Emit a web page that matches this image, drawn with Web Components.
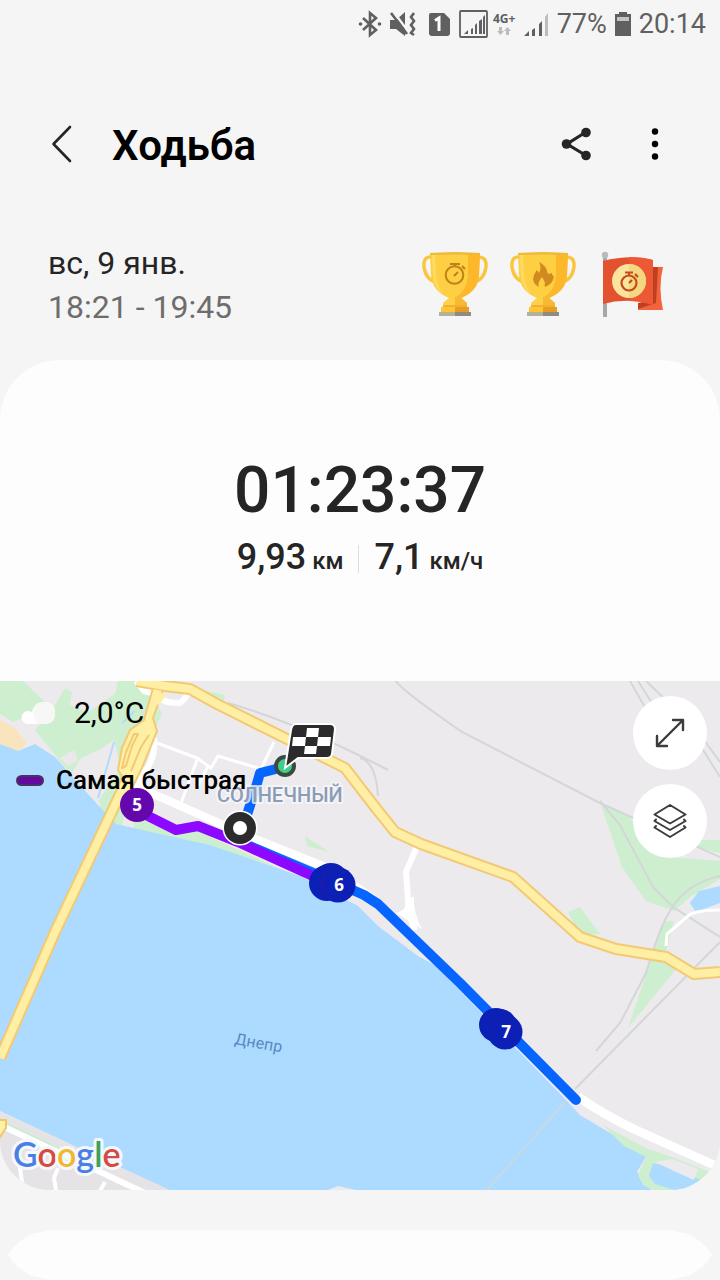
<!DOCTYPE html>
<html lang="ru">
<head>
<meta charset="utf-8">
<meta name="viewport" content="width=device-width, initial-scale=1">
<title>Ходьба</title>
<style>
  html { background: #f5f5f5; }
  body { margin: 0; font-family: Roboto, "Noto Sans", sans-serif; color: #252525; overflow-x: hidden; }
</style>
</head>
<body>
<workout-page></workout-page>

<script>
const define = (name, html) => {
  const template = document.createElement('template');
  template.innerHTML = html;
  customElements.define(name, class extends HTMLElement {
    constructor() {
      super();
      this.attachShadow({ mode: 'open' }).append(template.content.cloneNode(true));
    }
  });
};

define('status-bar', `
<style>
  :host { display: flex; justify-content: flex-end; align-items: center; gap: 4px; height: 48px; padding-right: 14px; color: #606060; font-size: 27px; line-height: 32px; }
  svg { display: block; fill: currentColor; }
  .net { display: flex; flex-direction: column; align-items: center; width: 25px; font: 700 12px/14px "Open Sans", "Noto Sans", sans-serif; }
</style>
<svg width="28" height="28" viewBox="356 9 28 28" role="img" aria-label="Bluetooth"><path d="M363 17l13 12-6 5V12l6 5-13 12" fill="none" stroke="currentColor" stroke-width="2.6"/><circle cx="360.500" cy="23" r="1.800"/><circle cx="379.500" cy="23" r="1.800"/></svg>
<svg width="31" height="28" viewBox="388 9 31 28" role="img" aria-label="Вибрация"><path d="M390 19h6l9-8v24l-9-7h-6z"/><path d="M393 10l17 23" stroke="#f5f5f5" stroke-width="2.400"/><path d="M391 12l16 21" stroke="currentColor" stroke-width="2.600"/><path d="M414 12l-3 4 3 4-3 4 3 4-3 4 3 2" fill="none" stroke="currentColor" stroke-width="2.600"/></svg>
<svg width="32" height="28" viewBox="423 9 32 28" role="img" aria-label="SIM 1"><path d="M431 12h13l6 6v14q0 3-3 3h-15q-3 0-3-3V14q0-2 2-2z"/><path d="M435 19.500l4-2.500v13" fill="none" stroke="#fff" stroke-width="3"/></svg>
<svg width="29" height="28" viewBox="460 9 29 28" role="img" aria-label="Сигнал"><rect x="461" y="10" width="27" height="26" rx="1" fill="none" stroke="currentColor" stroke-width="1.800"/><path d="M465 33l4-4v4zM472 28l2-1v6h-2zM476 24l2-2v11h-2zM480 20l3-2v15h-3zM484 16l2-2v19h-2z"/></svg>
<span class="net">4G+<svg width="16" height="10" viewBox="0 0 16 10"><path d="M3 1h3v4h2l-3.500 4L1 5h2zM10 9h3V5h2l-3.500-4L8 5h2z" fill="#bdbdbd"/></svg></span>
<svg width="32" height="28" viewBox="522 9 32 28" role="img" aria-label="Сигнал"><path d="M525 35l5-5v5zM533 29l3-2v8h-3zM540 23l3-3v15h-3z"/><path d="M546 16l3-4v23h-3z" fill="#bcbcbc"/></svg>
<span>77%</span>
<svg width="24" height="28" viewBox="611 9 24 28" role="img" aria-label="Батарея"><path d="M619 11h8v2h4v22h-16V13h4z"/><path d="M617 16h12v4h-12z" fill="#c4c4c4"/></svg>
<time>20:14</time>
`);

define('icon-button', `
<style>
  :host { display: block; flex: none; --size: 48px; --surface: transparent; }
  button { display: grid; place-items: center; width: var(--size); height: var(--size); padding: 0; border: 0; border-radius: 50%; background: var(--surface); cursor: pointer; }
</style>
<button type="button"><slot></slot></button>
`);

define('app-header', `
<style>
  :host { display: flex; align-items: center; gap: 26px; padding: 0 40px 0 38px; height: 72px; margin-top: 60px; color: #000; }
  h1 { flex: 1; margin: 0; padding-top: 4px; font-size: 42px; line-height: 52px; font-weight: 600; }
  nav { display: flex; gap: 32px; }
  svg { display: block; }
</style>
<icon-button><svg width="48" height="48" viewBox="38 120 48 48" role="img" aria-label="Назад"><path d="M70 127L53.500 144 70 161" fill="none" stroke="#252525" stroke-width="2.600" stroke-linecap="round" stroke-linejoin="round"/></svg></icon-button>
<h1>Ходьба</h1>
<nav>
  <icon-button><svg width="48" height="48" viewBox="552 120 48 48" role="img" aria-label="Поделиться"><path d="M586 132l-19 12 19 11.500" fill="none" stroke="#252525" stroke-width="3.200"/><g fill="#252525"><circle cx="586" cy="132.500" r="4.800"/><circle cx="566.500" cy="144" r="4.800"/><circle cx="586" cy="155.500" r="4.800"/></g></svg></icon-button>
  <icon-button><svg width="48" height="48" viewBox="632 120 48 48" role="img" aria-label="Ещё"><circle cx="655" cy="131.500" r="3.200"/><circle cx="655" cy="144" r="3.200"/><circle cx="655" cy="156.500" r="3.200"/></svg></icon-button>
</nav>
`);

define('trophy-cup', `
<style>
  :host { display: block; }
  svg { display: block; }
</style>
<svg width="72" height="72" viewBox="419 248 72 72">
  <path d="M432 257q-9-1-8 10 2 13 12 15M477 257q10-1 9 10-2 13-12 15" fill="none" stroke="#fbc43c" stroke-width="3.400"/>
  <path d="M430 253l25-.5 25 .5-1 22q-1 16-18 23h-12q-17-7-18-23z" fill="#fece43"/>
  <path d="M468 253l12 .3-1 22q-1 16-18 22.700h-6q12-7 13-22z" fill="#fcb72b"/>
  <path d="M432 255l1 20q2 15 10 19-6-8-7-18l-1-21z" fill="#ffdb62"/>
  <path d="M430 253l25-1 25 1-.5 2-24.500-.5-24.500.5z" fill="#edb93a"/>
  <path d="M443 303l7-6h10l7 6v4h-24z" fill="#ffd04a"/>
  <path d="M455 297h5l7 6v4h-12z" fill="#f8b932"/>
  <path d="M443 305h24v3h-24z" fill="#f0b235"/>
  <path d="M441 307h28v5h-28z" fill="#ffc535"/><path d="M455 307h14v5h-14z" fill="#e89c21"/>
  <path d="M439 312h32v4h-32z" fill="#b4b19a"/><path d="M455 312h16v4h-16z" fill="#8e8c80"/>
</svg>
`);

define('award-list', `
<style>
  :host { display: block; }
  ul { display: flex; gap: 16px; margin: 0; padding: 0; list-style: none; }
  li { display: grid; }
  li > * { grid-area: 1 / 1; }
  svg { display: block; }
</style>
<ul>
  <li aria-label="Рекорд времени"><trophy-cup></trophy-cup>
    <svg width="72" height="72" viewBox="419 248 72 72" fill="none" stroke="#c08117" stroke-width="2"><circle cx="454.500" cy="275" r="8.800"/><path d="M450 264h10M455 264v3M462 266l3 3M454 276l4-4"/></svg></li>
  <li aria-label="Рекорд калорий"><trophy-cup></trophy-cup>
    <svg width="72" height="72" viewBox="507 248 72 72"><path d="M539 287q-8-4-5-12 2-4 3-5l2 3q3-5 0-11 7 3 9 12l4-1q0 3 2 3-1 8-9 11-1-2 0-4-1-3-3-6-5 6-3 10z" fill="#d08a20"/></svg></li>
  <li aria-label="Новое достижение">
    <svg width="72" height="72" viewBox="595 248 72 72"><path d="M603 255h4v62h-4z" fill="#a5a8a9"/><circle cx="605" cy="255" r="3.200" fill="#b9bcbd"/><path d="M650 267h13q-5 20 0 43h-25v-6l12-4z" fill="#f1643e"/><path d="M653 267h5l-2 36-18 6v-6l14-3z" fill="#bf3f20"/><path d="M603 261q27-7 50-1v45q-25-8-50-1z" fill="#e3512e"/><path d="M629 257q15 0 24 3v45q-12-4-24-4z" fill="#ec5934"/><circle cx="629" cy="281" r="17" fill="#fbe49c"/><path d="M629 264a17 17 0 010 34z" fill="#f4d781"/><g fill="none" stroke="#c54a1c" stroke-width="2.200"><circle cx="629" cy="283" r="7.500"/><path d="M625 272.500h8M629 273v3M635 274l3 3M629 283l3-3"/></g></svg></li>
</ul>
`);

define('session-info', `
<style>
  :host { display: flex; justify-content: space-between; align-items: center; margin-top: 60px; padding: 0 53px 32px 48px; font-size: 32px; line-height: 44px; }
  p { margin: 0; }
  div { padding-top: 1px; height: 87px; }
  .hours { color: #6d6d6d; }
</style>
<div><p>вс, 9 янв.</p><p class="hours">18:21 - 19:45</p></div>
<award-list></award-list>
`);

define('workout-summary', `
<style>
  :host { display: flex; flex-direction: column; align-items: center; padding: 91px 24px 94px; background: #fdfdfd; border-radius: 60px 60px 0 0; font-weight: 500; }
  .duration { font-size: 64px; line-height: 80px; }
  .stats { display: flex; align-items: center; gap: 15px; margin: 0; font-size: 36px; line-height: 52px; }
  .stats span { display: flex; align-items: baseline; gap: 6px; white-space: nowrap; }
  .stats small { font-size: 24px; }
  i { width: 1px; height: 28px; background: #dedede; }
</style>
<time class="duration">01:23:37</time>
<p class="stats"><span>9,93 <small>км</small></span><i></i><span>7,1 <small>км/ч</small></span></p>
`);

define('route-map', `
<style>
  :host { display: grid; overflow: hidden; border-radius: 0 0 50px 50px; background: #eceaed; color: #000; }
  .canvas, .over { grid-area: 1 / 1; }
  .canvas { display: block; width: 100%; height: auto; }
  .over { display: flex; justify-content: space-between; align-items: flex-start; padding: 15px 13px 0 16px; z-index: 1; }
  .row { display: flex; align-items: center; }
  .weather { height: 34px; gap: 12px; font-size: 30px; line-height: 34px; }
  .legend { height: 34px; gap: 12px; margin-top: 33px; font-size: 26px; font-weight: 500; line-height: 34px; }
  .swatch { width: 24px; height: 7px; border: 2px solid #493262; border-radius: 6px; background: #65089f; }
  .tools { display: grid; gap: 14px; }
  .tools icon-button { --size: 74px; --surface: #fff; }
  svg { display: block; }
</style>
<svg class="canvas" viewBox="0 681 720 509" role="img" aria-label="Карта маршрута">
  <rect y="681" width="720" height="509" fill="#eceaed"/>
  <g fill="#cdefcf">
    <path d="M0 681h23l25 24-5 10-16 1-14 6L0 714zM35 730l16-18 14-24 7 4-2 13 18 7 27-18 3-14h22l12 14 10 20-10 20-14 24-8 40-12 40-17-26-2-12 22-32-7-28-15 10-18 8-10 16-12-14z"/>
    <path d="M190 687l35 8-2 8-20-6zM305 836l24 16-22-6z"/>
    <path d="M134 808l30 12 40 14 110 50 34 22-54-20-100-42-60-8z"/>
    <path d="M600 802l30 16 28 38 62 5v18l-30 18-16 14-28-10-24-34zM568 912l12-5 20 27-20 2zM697 840h23v13l-26-6zM664 921h10l-8 30 15 12-53 65z"/>
  </g>
  <path d="M0 720l15 8 12 15-9 8-18-7z" fill="#fae4bd"/>
  <path d="M0 744l18 7 17-7 20 13 42 47 19 20 44 10 50 11 90 31 58 30 20 20 40 30 18 10 129 133 15 16 67 40-10 17 15 19H360l-22-5-13 5H170L0 1111z" fill="#addaff"/>
  <path d="M60 758l14-8 4 10-10 6z" fill="#ebe8ea"/>
  <path d="M114 742q-7 25-16 56M122 723l13-12" stroke="#b6dafb" stroke-width="2" fill="none"/>
  <path d="M0 1112l170 78H0z" fill="#e6e3e7"/>
  <path d="M5 1122l88 42-20-1-58-30z" fill="#c9eccd"/>
  <path d="M19 1160l4 30M58 1168l-4 10 2 12M105 1182l-5 9" fill="none" stroke="#fff" stroke-width="4"/>
  <path d="M0 1125l145 68" stroke="#fff" stroke-width="6"/>
  <path d="M-2 1120h8v8l-8 12z" fill="#fff0a8" stroke="#efc867" stroke-width="2"/>
  <path d="M590 1112l60 33 27 14 43 17v15h-65l-12-6-5-10 8-18-22-11z" fill="#cdefcf"/>
  <path d="M653 1163l24 6 30 14-10 8h-20l-22-7-6-8z" fill="#addaff"/>
  <path d="M655 1162l17-3 26 10-4 11-20-9z" fill="#eceaed"/>
  <path d="M584 1109l60 26 52 30-48-16-64-34z" fill="#eceaed"/>
  <path d="M690 903l9-12 21-5v17l-24 9z" fill="#addaff"/>
  <g fill="none" stroke="#d4d6d8" stroke-width="2">
    <path d="M396 681q4 8 66 51l136 70 122 55M228 703q70 20 160 67M600 801l20 24 33 62 20 20 47 30M720 876q-35 8-50 35-10 15-24 62l-26 50-24 28M720 942l-145 147M360 758q16 4 18 38"/>
    <path d="M630 681l16 28M638 681l24 38M646 681l23 22M700 745l20 32M704 740l16 22"/>
  </g>
  <path d="M565 1102l-78 88" stroke="#c8d9df" stroke-width="2"/>
  <g fill="none" stroke="#fff" stroke-linejoin="round">
    <path d="M145 682q10 22 35 21 12-10 8-20M136 681l8 10 16 4" stroke-width="6"/>
    <path d="M154 738q2 18-8 32l-10 18M142 760q-6 22 10 35" stroke-width="6"/>
    <path d="M157 743l40 15 14 10 7-12 43 13 13-27M197 760l-17 46M208 766l-10 20" stroke-width="3"/>
    <path d="M140 788l108 48 80 32 42 28 70 67 135 135" stroke-width="8"/>
    <path d="M418 844l-12 28 3 42 6 16" stroke-width="6"/>
    <path d="M396 913q11-2 11-15l7-1q-1 16 8 32z" fill="#fff" stroke="none"/>
    <path d="M578 1097q30 20 60 34l76 34" stroke-width="9"/>
    <path d="M720 910q-25 0-32 6l-21 18-1 12" stroke-width="3"/>
  </g>
  <g stroke-linejoin="round" fill="none">
    <path d="M0 1058L55 932l68-144" stroke="#f3c973" stroke-width="12"/>
    <path d="M137 681l28 5 25 3 27 15 76 38 52 26 30 39 20 25 26 12 92 33 67 60 36 12 50 8 28 17 26-2" stroke="#f3c973" stroke-width="12"/>
    <path d="M153 688l-9 32-14 10-8 18-4 22 4 6-5 17 11 3 14-28 15-37-4-13 10-28z" fill="#ffefa5" stroke="#f3c973" stroke-width="2"/>
    <path d="M137 681l28 5 25 3 27 15 76 38 52 26 30 39 20 25 26 12 92 33 67 60 36 12 50 8 28 17 26-2" stroke="#ffefa5" stroke-width="8"/>
    <path d="M0 1058L55 932l68-144 3-8" stroke="#ffefa5" stroke-width="8"/>
    <path d="M138 734l-6 12-6 20-4 2 4-16 8-18zM149 735l-8 12-10 24" stroke="#f3c973" stroke-width="2"/>
    <path d="M153 692l14 2-7 10-8 2z" fill="#ffefa5"/>
  </g>
  <g fill="none" stroke-linejoin="round" stroke="#0664ff">
    <path d="M284 767l-24 6-4 14-13 40" stroke-width="10"/>
    <path d="M240 842l90 38 34 15 14 9 82 79 116 117" stroke-width="10" stroke-linecap="round"/>
    <path d="M138 806l10 10 28 14 22-4 40 16 90 41" stroke="#8c08ff" stroke-width="10"/>
  </g>
  <text x="217" y="802" font-size="20" font-weight="500" fill="#8e9cb3" stroke="#f4f8fc" stroke-width="4" stroke-opacity=".8" paint-order="stroke" stroke-linejoin="round">СОЛНЕЧНЫЙ</text>
  <text x="234" y="1044" font-size="16" fill="#5789c4" transform="rotate(10 234 1044)">Днепр</text>
  <circle cx="240" cy="828" r="17.500" fill="#fff"/><circle cx="240" cy="828" r="16" fill="#2b2b2b"/><circle cx="240" cy="828" r="7" fill="#fff"/>
  <circle cx="285" cy="766" r="9" fill="#40cd88" stroke="#3b4945" stroke-width="4"/>
  <path d="M296 724h34q5 0 5 5l-3 25q-1 4-5 4h-29q-5 4-13 10l6-38q1-6 5-6z" fill="#2b2b2b" stroke="#fff" stroke-width="2"/>
  <path d="M307 728h12l-1 9h-12zM293 737h13l-1 9h-13zM318 737h13l-1 9h-13zM305 746h12l-1 8h-12z" fill="#fff"/>
  <circle cx="137" cy="805" r="17" fill="#6407ac"/>
  <circle cx="327" cy="883" r="18" fill="#0c20b6"/><circle cx="331" cy="881" r="18" fill="#0c20b6"/><circle cx="338" cy="885" r="17.500" fill="#0c20b6"/>
  <path d="M331 867q-18 14-1 32" fill="none" stroke="#43109f" stroke-width="1"/>
  <circle cx="496" cy="1025" r="17" fill="#0c20b6"/><circle cx="500" cy="1026" r="17" fill="#0c20b6"/><circle cx="505" cy="1032" r="17.500" fill="#0c20b6"/>
  <g fill="#fff" font-family="Open Sans, Noto Sans, sans-serif" font-size="17" font-weight="700" text-anchor="middle">
    <text x="137" y="811">5</text><text x="339" y="891">6</text><text x="506" y="1038">7</text>
  </g>
  <text x="13" y="1167" font-family="Lato, sans-serif" font-size="34" font-weight="600" stroke="#f4f8fc" stroke-width="6" stroke-linejoin="round" paint-order="stroke" fill="#4a80e4">G<tspan fill="#d64a3f">o</tspan><tspan fill="#efb92b">o</tspan><tspan>g</tspan><tspan fill="#3da159">l</tspan><tspan fill="#d64a3f">e</tspan></text>
</svg>
<div class="over">
  <div>
    <div class="row weather"><svg width="46" height="28" viewBox="16 699 46 28" role="img" aria-label="Облачно"><path d="M28 724a6.500 6.500 0 010-13q2 0 4 1 2-10 12-10 11 0 11 11t-11 11z" fill="#fff"/><path d="M33 714q1-12 11-12 11 0 11 11t-11 11h-8z" fill="#f7f7f5"/></svg><span>2,0°C</span></div>
    <div class="row legend"><span class="swatch"></span><span>Самая быстрая</span></div>
  </div>
  <div class="tools">
    <icon-button><svg width="36" height="36" viewBox="652 715 36 36" fill="none" stroke="#3c3c3c" stroke-width="2.400" stroke-linecap="round" stroke-linejoin="round" role="img" aria-label="На весь экран"><path d="M657 746l26-26M673 720h10v10M657 736v10h10"/></svg></icon-button>
    <icon-button><svg width="36" height="36" viewBox="652 803 36 36" fill="none" stroke="#3c3c3c" stroke-width="2" stroke-linecap="round" stroke-linejoin="round" role="img" aria-label="Слои"><path d="M670 805l15.500 9.500-15.500 9-15.500-9zM656 819.500l-1.500 1.500 15.500 9 15.500-9-1.500-1.500M656 826l-1.500 1.500 15.500 9.500 15.500-9.500-1.500-1.500"/></svg></icon-button>
  </div>
</div>
`);

define('next-card', `
<style>
  :host { display: block; height: 50px; margin: 40px 8px 0; background: #fdfdfd;
    clip-path: polygon(0 50%, 4px 38%, 12px 22%, 24px 8%, 42px 0, calc(100% - 42px) 0, calc(100% - 24px) 8%, calc(100% - 12px) 22%, calc(100% - 4px) 38%, 100% 50%, calc(100% - 4px) 62%, calc(100% - 12px) 78%, calc(100% - 24px) 92%, calc(100% - 42px) 100%, 42px 100%, 24px 92%, 12px 78%, 4px 62%); }
</style>
<slot></slot>
`);

define('workout-page', `
<style>
  :host { display: block; }
  main { display: block; }
</style>
<status-bar></status-bar>
<app-header></app-header>
<main>
  <session-info></session-info>
  <workout-summary></workout-summary>
  <route-map></route-map>
  <next-card></next-card>
</main>
`);
</script>
</body>
</html>
